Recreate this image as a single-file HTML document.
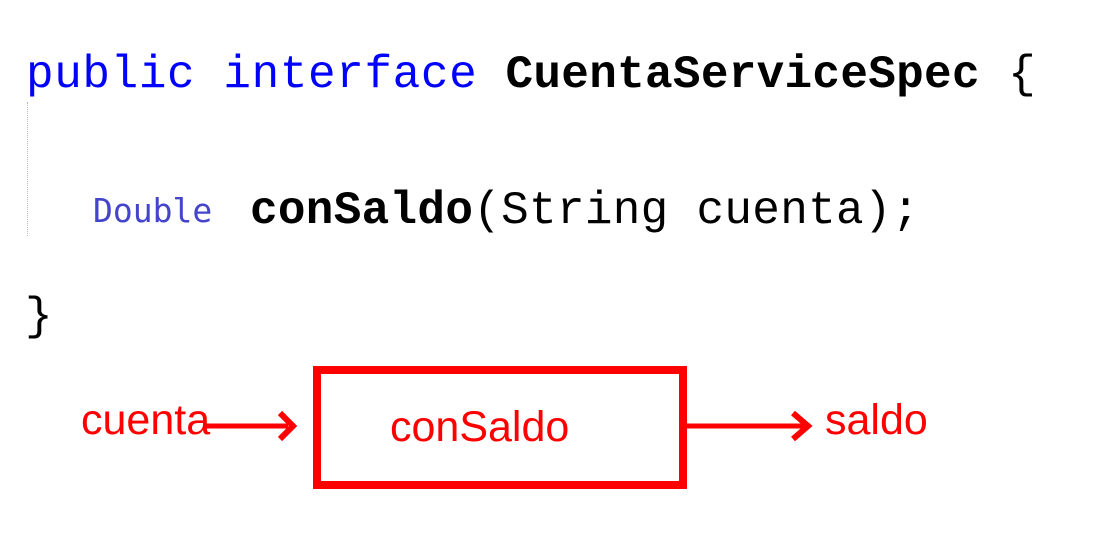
<!DOCTYPE html>
<html><head><style>
body{margin:0;width:1106px;height:550px;background:#fff;position:relative;overflow:hidden}
.t{position:absolute;white-space:pre;line-height:1}
.m{font-family:"Liberation Mono",monospace;font-size:46px}
.s{font-family:"Liberation Sans",sans-serif;color:#f00;font-size:43px}
</style></head><body>
<div class="t m" style="left:26px;top:52px;color:#0000ff;letter-spacing:0.6px">public interface <b style="color:#000;letter-spacing:0.3px">CuentaServiceSpec</b><span style="color:#000"> {</span></div>
<div style="position:absolute;left:27px;top:102px;height:134px;border-left:1px dotted #bbb"></div>
<div class="t" style="left:93px;top:194px;font-family:'DejaVu Sans Mono',monospace;font-size:33px;color:#4444cc">Double</div>
<div class="t m" style="left:250px;top:188px;color:#000;letter-spacing:0.3px"><b>conSaldo</b>(String cuenta);</div>
<div class="t m" style="left:25px;top:294px;color:#000">}</div>
<div style="position:absolute;left:313px;top:366px;width:358px;height:107px;border:8px solid #f00"></div>
<div class="t s" style="left:390px;top:406px">conSaldo</div>
<div class="t s" style="left:81px;top:399px">cuenta</div>
<div class="t s" style="left:825px;top:399px">saldo</div>
<svg style="position:absolute;left:0;top:0" width="1106" height="550">
<line x1="205" y1="426" x2="288" y2="426" stroke="#f00" stroke-width="5"/>
<polyline points="280,413 293,426 280,439" fill="none" stroke="#f00" stroke-width="6"/>
<line x1="687" y1="426" x2="810" y2="426" stroke="#f00" stroke-width="5"/>
<polyline points="793,413 808,426 793,439" fill="none" stroke="#f00" stroke-width="6"/>
</svg>
</body></html>
